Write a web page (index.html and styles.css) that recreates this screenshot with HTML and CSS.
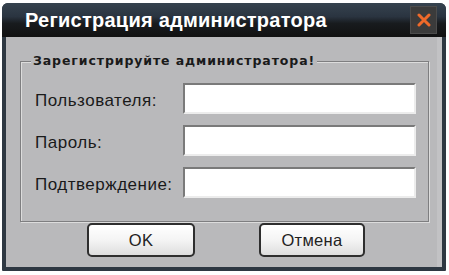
FILE: index.html
```html
<!DOCTYPE html>
<html lang="ru">
<head>
<meta charset="utf-8">
<title>Регистрация администратора</title>
<link rel="stylesheet" href="styles.css">
</head>
<body>
<div class="window">
  <div class="titlebar">
    <span class="title">Регистрация администратора</span>
    <span class="close">
      <svg width="14" height="14" viewBox="0 0 14 14"><path d="M2 2 L12 12 M12 2 L2 12" stroke="#f06a2a" stroke-width="3" stroke-linecap="round"/></svg>
    </span>
  </div>
  <div class="content">
    <div class="group">
      <span class="legend">Зарегистрируйте администратора!</span>
      <div class="form">
        <label class="label">Пользователя:</label><span class="input"></span>
        <label class="label">Пароль:</label><span class="input"></span>
        <label class="label">Подтверждение:</label><span class="input"></span>
      </div>
    </div>
    <div class="buttons">
      <span class="btn btn-ok">OK</span>
      <span class="btn btn-cancel">Отмена</span>
    </div>
  </div>
</div>
</body>
</html>
```
FILE: styles.css
```css
html, body { margin: 0; padding: 0; background: #ffffff; }
body { font-family: "Liberation Sans", Arial, sans-serif; }

.window {
  margin: 3px 0 0 2px;
  width: 444px;
  height: 268px;
  box-sizing: border-box;
  background: #2e3842;
  border-radius: 6px 6px 1px 1px;
  padding: 0 4px 4px 4px;
  display: flex;
  flex-direction: column;
}

.titlebar {
  height: 34px;
  margin: 0 -4px;
  padding: 0 9px 0 23px;
  border-radius: 6px 6px 0 0;
  background: linear-gradient(#36434f 0%, #2a3440 40%, #181b1e 60%, #111111 100%);
  display: flex;
  align-items: center;
  justify-content: space-between;
}

.title {
  color: #ffffff;
  font-weight: bold;
  font-size: 20px;
  letter-spacing: 0.25px;
  padding-top: 1px;
}

.close {
  width: 25px;
  height: 26px;
  background: #3b3b3b;
  border: 1px solid #4c4c4c;
  display: flex;
  align-items: center;
  justify-content: center;
}

.content {
  flex: 1;
  background: #b9b9bb;
  box-shadow: inset -5px 0 0 #c2c2c4;
  padding: 24px 0 0 14px;
}

.group {
  position: relative;
  width: 409px;
  height: 161px;
  box-sizing: border-box;
  border: 1px solid #7e7e80;
  box-shadow: inset 1px 1px 0 #dcdcdc, 1px 1px 0 #dcdcdc;
  padding: 21px 12px 0 14px;
}

.legend {
  position: absolute;
  top: -8px;
  left: 10px;
  padding: 0 2px;
  background: #b9b9bb;
  font-family: "DejaVu Sans", Verdana, sans-serif;
  font-size: 12.5px;
  font-weight: bold;
  letter-spacing: 0.9px;
  color: #1a1a1a;
  line-height: 14px;
}

.form {
  display: grid;
  grid-template-columns: 148px 233px;
  grid-auto-rows: 31px;
  row-gap: 11px;
  align-items: center;
}

.label {
  font-size: 17px;
  color: #1a1a1a;
  padding-top: 4px;
  letter-spacing: 0.5px;
}

.input {
  height: 31px;
  box-sizing: border-box;
  background: #ffffff;
  border-top: 2px solid #7a7a7a;
  border-left: 2px solid #7a7a7a;
  border-bottom: 2px solid #ececec;
  border-right: 2px solid #ececec;
}

.buttons {
  display: flex;
  gap: 64px;
  margin-top: 1px;
  padding-left: 67px;
}

.btn {
  height: 34px;
  box-sizing: border-box;
  border: 2px solid #2e2e2e;
  border-radius: 5px;
  background: linear-gradient(#ffffff 0%, #f4f4f4 50%, #dedede 100%);
  display: flex;
  align-items: center;
  justify-content: center;
  font-size: 16.5px;
  letter-spacing: 0.3px;
  color: #222222;
}

.btn-ok { width: 108px; }
.btn-cancel { width: 106px; }
```
